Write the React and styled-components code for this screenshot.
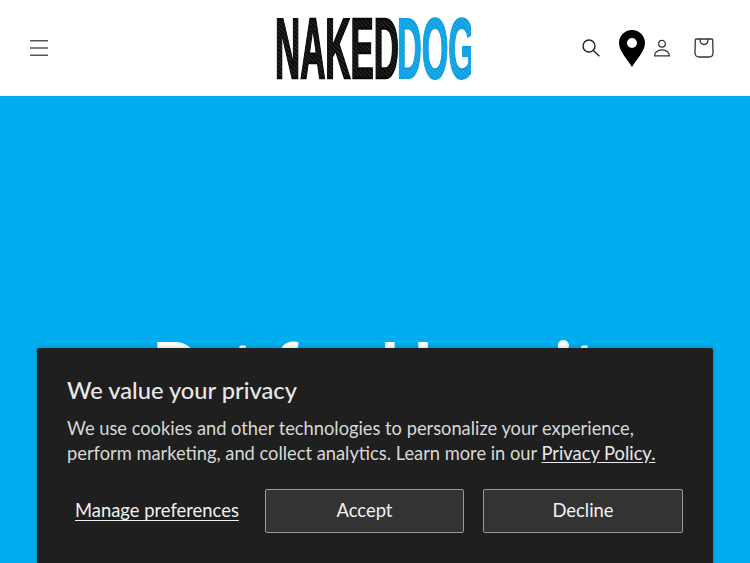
import React from "react";
import styled, { createGlobalStyle } from "styled-components";

const Global = createGlobalStyle`
  html, body { margin: 0; padding: 0; height: 100%; overflow: hidden; background: #00aeef; }
  #root { height: 100%; }
  * { box-sizing: border-box; }
`;

const Page = styled.div`
  width: 750px;
  height: 563px;
  position: relative;
  overflow: hidden;
  display: flex;
  flex-direction: column;
  font-family: "Lato", "Liberation Sans", sans-serif;
`;

const Header = styled.header`
  height: 96px;
  flex: none;
  background: #fff;
  display: grid;
  grid-template-columns: 1fr auto 1fr;
  align-items: center;
  padding: 0 26px 0 19px;
`;

const IconButton = styled.button`
  width: 40px;
  height: 40px;
  border: 0;
  padding: 0;
  background: none;
  color: #121212;
  display: flex;
  align-items: center;
  justify-content: center;
`;

const Actions = styled.div`
  display: flex;
  align-items: center;
  justify-content: flex-end;
  gap: 2px;
`;

const Pin = styled.svg`
  width: 26px;
  height: 37px;
  margin: 1px -5px 0 6px;
  flex: none;
`;

const LogoMark = styled.svg`
  display: block;
  width: 198px;
  height: 64px;
`;

const Hero = styled.main`
  flex: 1;
  background: #00aeef;
  display: flex;
  justify-content: center;
  padding-top: 234px;
`;

const Title = styled.h1`
  margin: 0;
  color: #fff;
  font-size: 70px;
  line-height: 72px;
  font-weight: 700;
  white-space: nowrap;
`;

const Banner = styled.section`
  position: absolute;
  left: 37px;
  right: 37px;
  top: 348px;
  height: 240px;
  background: #1f1f1f;
  border-radius: 2px;
  box-shadow: 0 0 5px rgba(0, 0, 0, 0.25);
  padding: 26px 30px 0;
  color: #e6e6e6;
`;

const Heading = styled.h2`
  margin: 0 0 10px;
  font-size: 23.7px;
  line-height: 32px;
  font-weight: 500;
  color: #e8e8e8;
`;

const Copy = styled.p`
  margin: 0;
  font-size: 18.3px;
  line-height: 24.5px;
  font-weight: 400;
  color: #d8d8d8;
`;

const Policy = styled.a`
  color: #e8e8e8;
  text-decoration: underline;
  text-underline-offset: 2px;
`;

const Controls = styled.div`
  display: grid;
  grid-template-columns: 179px 199px 200px;
  column-gap: 19px;
  margin-top: 24px;
`;

const Manage = styled.a`
  align-self: center;
  padding: 0 0 2px 8px;
  font-size: 18.4px;
  color: #f0f0f0;
  text-decoration: underline;
  text-underline-offset: 3px;
  white-space: nowrap;
`;

const Choice = styled.button`
  height: 44px;
  border: 1px solid #9a9a9a;
  border-radius: 2px;
  background: #333;
  color: #f2f2f2;
  padding: 0 0 2px;
  font: 400 18.4px "Lato", "Liberation Sans", sans-serif;
`;

const Logo = () => (
  <LogoMark viewBox="0 0 198 64" role="img" aria-label="Naked Dog">
    <defs>
      <pattern id="hatch" width="3" height="3" patternUnits="userSpaceOnUse" patternTransform="rotate(45)">
        <rect width="3" height="3" fill="#0a0a0a" />
        <rect width="3" height="0.7" fill="#3a3a3a" />
      </pattern>
      <pattern id="hatchBlue" width="3" height="3" patternUnits="userSpaceOnUse" patternTransform="rotate(45)">
        <rect width="3" height="3" fill="#0b9fe3" />
        <rect width="3" height="0.6" fill="#45b8ec" />
      </pattern>
    </defs>
    <text x="2" y="61.500" fontFamily="Liberation Sans" fontWeight="700" fontSize="85" textLength="124" lengthAdjust="spacingAndGlyphs" fill="url(#hatch)" stroke="#0a0a0a" strokeWidth="2.400">NAKED</text>
    <text x="124" y="61.500" fontFamily="Liberation Sans" fontWeight="700" fontSize="85" textLength="78" lengthAdjust="spacingAndGlyphs" fill="url(#hatchBlue)" stroke="#0b9fe3" strokeWidth="2">DOG</text>
  </LogoMark>
);

export default function App() {
  return (
    <Page>
      <Global />
      <Header>
        <IconButton aria-label="Menu">
          <svg width="18" height="16" viewBox="0 0 18 16" fill="none" stroke="#555" strokeWidth="1.4">
            <path d="M0 .8h18M0 8h18M0 15.200h18" />
          </svg>
        </IconButton>
        <Logo />
        <Actions>
          <IconButton aria-label="Search">
            <svg width="18" height="18" viewBox="0 0 18 18" fill="none" stroke="#222" strokeWidth="1.4">
              <circle cx="7" cy="7" r="6" />
              <path d="M11.400 11.400 17.400 17.200" />
            </svg>
          </IconButton>
          <Pin viewBox="0 0 26 37" aria-label="Locations">
            <path fillRule="evenodd" fill="#000" d="M13 0C5.800 0 0 5.700 0 13c0 8.500 9.300 17.500 13 24 3.700-6.500 13-15.500 13-24C26 5.700 20.200 0 13 0Zm0 8a5 5 0 1 1 0 10 5 5 0 0 1 0-10Z" />
          </Pin>
          <IconButton aria-label="Account">
            <svg width="18" height="18" viewBox="0 0 20 20" fill="none" stroke="#333" strokeWidth="1.400">
              <circle cx="10" cy="5.200" r="3.700" />
              <path d="M1.800 18.800h16.400c.4-3.900-3-6.600-8.200-6.600s-8.600 2.700-8.200 6.600Z" />
            </svg>
          </IconButton>
          <IconButton aria-label="Cart">
            <svg width="20" height="20" viewBox="0 0 20 20" fill="none" stroke="#333" strokeWidth="1.300">
              <path d="M2.200 1h15.600c.5 0 .9.400.9.900l.3 13.100c0 2.200-1.500 4-3.900 4H4.900C2.500 19 1 17.200 1 15l.3-13.100c0-.5.400-.9.900-.9Z" />
              <path d="M6 1.200c0 3.400 1.600 5.300 4 5.300s4-1.900 4-5.300" />
            </svg>
          </IconButton>
        </Actions>
      </Header>
      <Hero>
        <Title>Pet for Hermit</Title>
      </Hero>
      <Banner>
        <Heading>We value your privacy</Heading>
        <Copy>
          We use cookies and other technologies to personalize your experience, perform marketing, and collect analytics. Learn more in our <Policy>Privacy Policy.</Policy>
        </Copy>
        <Controls>
          <Manage>Manage preferences</Manage>
          <Choice>Accept</Choice>
          <Choice>Decline</Choice>
        </Controls>
      </Banner>
    </Page>
  );
}
